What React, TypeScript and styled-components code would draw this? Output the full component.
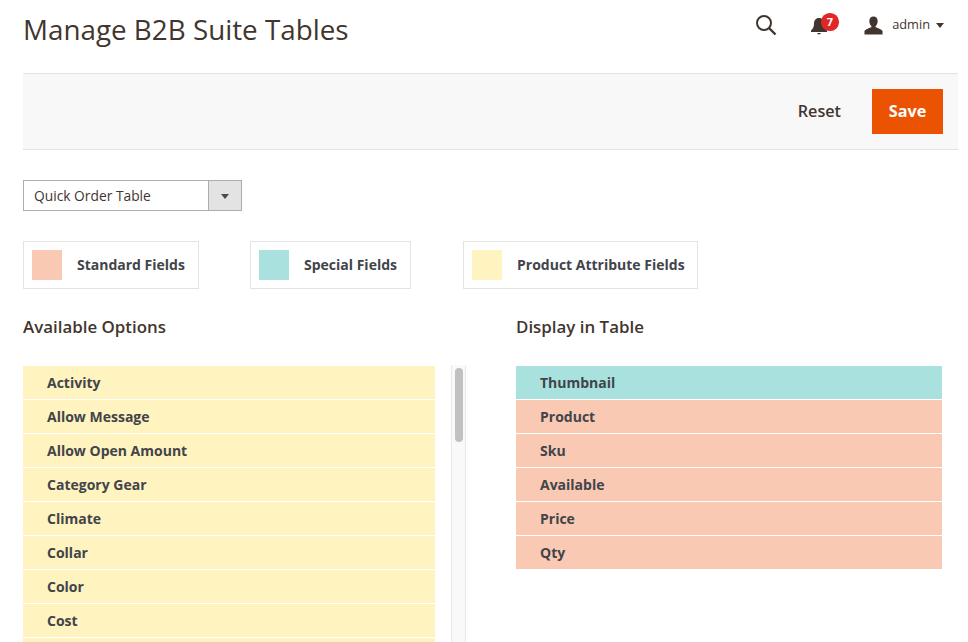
import React from "react";
import styled, { createGlobalStyle } from "styled-components";

const GlobalStyle = createGlobalStyle`
  html, body {
    margin: 0;
    padding: 0;
    height: 100%;
    overflow: hidden;
    background: #fff;
    font-family: "Open Sans", "Liberation Sans", sans-serif;
    color: #41362f;
  }
`;

const COLORS = {
  standard: "#fac9b3",
  special: "#a9e1df",
  attribute: "#fff3bf",
};

type Kind = keyof typeof COLORS;

const Page = styled.div`
  width: 968px;
  height: 642px;
  overflow: hidden;
  padding: 0 10px 0 23px;
  box-sizing: border-box;
`;

const Header = styled.header`
  height: 73px;
  display: flex;
  align-items: flex-start;
  justify-content: space-between;
`;

const Title = styled.h1`
  margin: 10px 0 0;
  font-size: 27.8px;
  line-height: 38px;
  font-weight: 400;
  color: #41362f;
`;

const HeaderActions = styled.div`
  display: flex;
  align-items: center;
  height: 20px;
  margin-top: 15px;
  padding-right: 14px;
`;

const IconButton = styled.span<{ $gap: number }>`
  display: flex;
  position: relative;
  margin-right: ${(p) => p.$gap}px;
`;

const Badge = styled.span`
  position: absolute;
  top: -2px;
  left: 10px;
  width: 17.5px;
  height: 17.5px;
  border-radius: 50%;
  background: #e22626;
  color: #fff;
  font-size: 11px;
  font-weight: 700;
  line-height: 17.5px;
  text-align: center;
`;

const UserName = styled.span`
  font-size: 12.8px;
  margin: -2px 0 0 9px;
  color: #41362f;
`;

const Caret = styled.span`
  width: 0;
  height: 0;
  margin: 1px 0 0 6px;
  border-left: 4px solid transparent;
  border-right: 4px solid transparent;
  border-top: 5px solid #41362f;
`;

const Toolbar = styled.div`
  height: 77px;
  box-sizing: border-box;
  background: #f8f8f8;
  border-top: 1px solid #e3e3e3;
  border-bottom: 1px solid #e3e3e3;
  display: flex;
  align-items: center;
  justify-content: flex-end;
  padding-right: 15px;
  gap: 31px;
`;

const ResetButton = styled.button`
  border: 0;
  padding: 0 0 2px;
  background: transparent;
  font-family: inherit;
  font-size: 16.2px;
  font-weight: 600;
  color: #41362f;
`;

const SaveButton = styled.button`
  width: 71px;
  height: 45px;
  border: 0;
  padding: 0 0 2px;
  background: #eb5202;
  color: #fff;
  font-family: inherit;
  font-size: 16.2px;
  font-weight: 700;
`;

const SelectBox = styled.div`
  width: 219px;
  height: 31px;
  box-sizing: border-box;
  margin-top: 30px;
  border: 1px solid #adadad;
  display: flex;
  font-size: 13.8px;
  color: #41362f;
`;

const SelectLabel = styled.span`
  flex: 1;
  padding-left: 10px;
  line-height: 29px;
`;

const SelectArrow = styled.span`
  width: 32px;
  background: #e3e3e3;
  border-left: 1px solid #adadad;
  display: flex;
  align-items: center;
  justify-content: center;

  &::after {
    content: "";
    margin-top: 1px;
    border-left: 4px solid transparent;
    border-right: 4px solid transparent;
    border-top: 5px solid #514943;
  }
`;

const Legend = styled.div`
  display: flex;
  margin-top: 30px;
`;

const LegendItem = styled.div<{ $width: number; $gap: number }>`
  display: flex;
  align-items: center;
  width: ${(p) => p.$width}px;
  height: 48px;
  box-sizing: border-box;
  border: 1px solid #e3e3e3;
  padding-left: 8px;
  margin-right: ${(p) => p.$gap}px;
  font-size: 14px;
  font-weight: 700;
  color: #41444a;
`;

const LegendLabel = styled.span`
  margin-bottom: 2px;
  white-space: nowrap;
`;

const Swatch = styled.span<{ $kind: Kind }>`
  width: 30px;
  height: 30px;
  margin-right: 15px;
  background: ${(p) => COLORS[p.$kind]};
`;

const Columns = styled.div`
  display: flex;
  margin-top: 25px;
`;

const LeftColumn = styled.section`
  width: 443px;
  flex: none;
`;

const RightColumn = styled.section`
  width: 426px;
  margin-left: 50px;
  flex: none;
`;

const Heading = styled.h2`
  margin: 0 0 26px;
  font-size: 16.9px;
  line-height: 26px;
  font-weight: 600;
  color: #41362f;
`;

const ScrollArea = styled.div`
  display: flex;
  justify-content: space-between;
  height: 300px;
`;

const List = styled.div`
  flex: none;
  width: 412px;
`;

const FullList = styled.div`
  width: 426px;
`;

const Row = styled.div<{ $kind: Kind }>`
  height: 33px;
  margin-bottom: 1px;
  padding-left: 24px;
  background: ${(p) => COLORS[p.$kind]};
  font-size: 14px;
  font-weight: 700;
  line-height: 33px;
  color: #41444a;
`;

const ScrollTrack = styled.div`
  position: relative;
  width: 13px;
  height: 300px;
  margin-top: -1px;
  background: #f9f9f9;
  border-left: 1px solid #e8e8e8;
  border-right: 1px solid #e8e8e8;
`;

const ScrollThumb = styled.div`
  position: absolute;
  top: 3px;
  left: 3px;
  width: 8px;
  height: 74px;
  border-radius: 4px;
  background: #c1c1c1;
`;

const available = [
  "Activity",
  "Allow Message",
  "Allow Open Amount",
  "Category Gear",
  "Climate",
  "Collar",
  "Color",
  "Cost",
  "",
];

const display: { label: string; kind: Kind }[] = [
  { label: "Thumbnail", kind: "special" },
  { label: "Product", kind: "standard" },
  { label: "Sku", kind: "standard" },
  { label: "Available", kind: "standard" },
  { label: "Price", kind: "standard" },
  { label: "Qty", kind: "standard" },
];

const SearchIcon = () => (
  <svg width="22" height="22" viewBox="0 0 22 22" fill="none" stroke="#41362f">
    <circle cx="9" cy="9" r="7" strokeWidth="2" />
    <path d="M14 14l6.5 6.5" strokeWidth="2.4" />
  </svg>
);

const BellSvg = styled.svg`
  margin-top: 3px;
`;

const BellIcon = () => (
  <BellSvg width="16" height="17" viewBox="0 0 16 17" fill="#41362f">
    <path d="M8 0C4.600 0 3 2.600 3 5.600c0 3.300-.9 5-3 6.900V14h16v-1.500c-2.100-1.900-3-3.600-3-6.900C13 2.600 11.400 0 8 0z" />
    <path d="M6 15a2.100 2.100 0 0 0 4 0z" />
  </BellSvg>
);

const UserIcon = () => (
  <svg width="19" height="19" viewBox="0 0 20 19" fill="#41362f">
    <path d="M10 0c2.800 0 4.400 2 4.400 4.700 0 2.200-1 4.300-2.200 5.300v1.300c2.800 1 6.800 2.200 7.300 4.200V19H.500v-3.500c.5-2 4.500-3.200 7.300-4.200V10C6.600 9 5.600 6.900 5.600 4.700 5.600 2 7.200 0 10 0z" />
  </svg>
);

export default function App() {
  return (
    <Page>
      <GlobalStyle />
      <Header>
        <Title>Manage B2B Suite Tables</Title>
        <HeaderActions>
          <IconButton $gap={34}>
            <SearchIcon />
          </IconButton>
          <IconButton $gap={37}>
            <BellIcon />
            <Badge>7</Badge>
          </IconButton>
          <UserIcon />
          <UserName>admin</UserName>
          <Caret />
        </HeaderActions>
      </Header>
      <Toolbar>
        <ResetButton>Reset</ResetButton>
        <SaveButton>Save</SaveButton>
      </Toolbar>
      <SelectBox>
        <SelectLabel>Quick Order Table</SelectLabel>
        <SelectArrow />
      </SelectBox>
      <Legend>
        <LegendItem $width={176} $gap={51}>
          <Swatch $kind="standard" />
          <LegendLabel>Standard Fields</LegendLabel>
        </LegendItem>
        <LegendItem $width={161} $gap={52}>
          <Swatch $kind="special" />
          <LegendLabel>Special Fields</LegendLabel>
        </LegendItem>
        <LegendItem $width={235} $gap={0}>
          <Swatch $kind="attribute" />
          <LegendLabel>Product Attribute Fields</LegendLabel>
        </LegendItem>
      </Legend>
      <Columns>
        <LeftColumn>
          <Heading>Available Options</Heading>
          <ScrollArea>
            <List>
              {available.map((label, i) => (
                <Row key={i} $kind="attribute">
                  {label}
                </Row>
              ))}
            </List>
            <ScrollTrack>
              <ScrollThumb />
            </ScrollTrack>
          </ScrollArea>
        </LeftColumn>
        <RightColumn>
          <Heading>Display in Table</Heading>
          <FullList>
            {display.map((item) => (
              <Row key={item.label} $kind={item.kind}>
                {item.label}
              </Row>
            ))}
          </FullList>
        </RightColumn>
      </Columns>
    </Page>
  );
}
